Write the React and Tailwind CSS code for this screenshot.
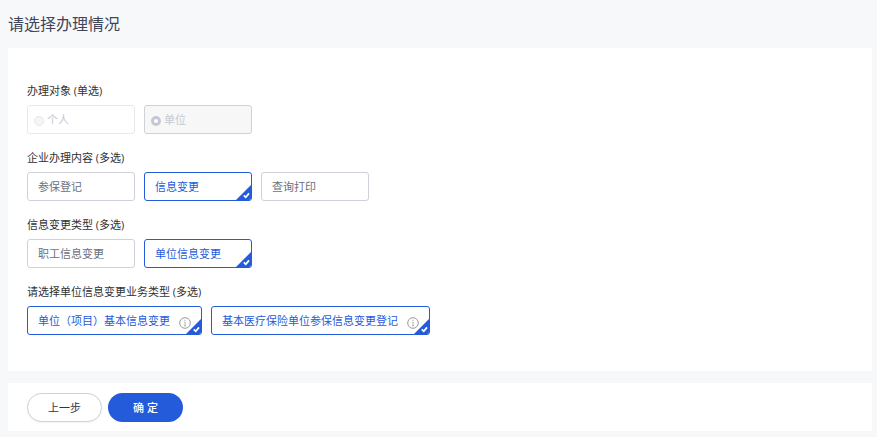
import { useState } from "react";

const groups = [
  {
    key: "content",
    label: "企业办理内容 (多选)",
    options: [{ label: "参保登记" }, { label: "信息变更" }, { label: "查询打印" }],
  },
  {
    key: "changeType",
    label: "信息变更类型 (多选)",
    options: [{ label: "职工信息变更" }, { label: "单位信息变更" }],
  },
  {
    key: "business",
    label: "请选择单位信息变更业务类型 (多选)",
    options: [
      { label: "单位（项目）基本信息变更", hasInfo: true },
      { label: "基本医疗保险单位参保信息变更登记", hasInfo: true },
    ],
  },
];

const targets = ["个人", "单位"];

function OptionGroup({ label, children }) {
  return (
    <fieldset>
      <legend className="mb-1 text-[11px] leading-5 text-[#303133]">{label}</legend>
      <div className="flex flex-wrap gap-[9px]">{children}</div>
    </fieldset>
  );
}

function InfoIcon() {
  return (
    <svg className="ml-[9px] mt-[3px] w-3 h-3 shrink-0" viewBox="0 0 12 12" fill="none" aria-hidden="true">
      <circle cx="6" cy="6" r="5.3" stroke="#999" />
      <path d="M4.9 5.2H6.1V8.8M5 8.8H7.2" stroke="#999" strokeWidth="0.7" />
      <rect x="5.5" y="2.8" width="1" height="1" fill="#999" />
    </svg>
  );
}

function CheckCorner() {
  return (
    <svg className="absolute right-0 bottom-0 w-[15px] h-[15px]" viewBox="0 0 15 15" aria-hidden="true">
      <path d="M15 0V15H0Z" fill="#245bdb" />
      <path d="M7.8 10.4L9.8 12.3L13 8.4" fill="none" stroke="#fff" strokeWidth="1.8" />
    </svg>
  );
}

function CheckOption({ label, hasInfo, checked, onChange }) {
  return (
    <label
      className={`relative flex items-center min-w-[108px] h-[29px] px-[10px] pt-[2px] border rounded-[3px] overflow-hidden text-[11px] cursor-pointer ${
        checked ? "border-[#245bdb] text-[#245bdb]" : "border-[#cfd0da] text-[#6b6f80]"
      }`}
    >
      <input type="checkbox" className="sr-only" checked={checked} onChange={onChange} />
      <span>{label}</span>
      {hasInfo && <InfoIcon />}
      {checked && <CheckCorner />}
    </label>
  );
}

export default function App() {
  const [selected, setSelected] = useState([
    "信息变更",
    "单位信息变更",
    "单位（项目）基本信息变更",
    "基本医疗保险单位参保信息变更登记",
  ]);

  const toggle = (label) => {
    setSelected((prev) =>
      prev.includes(label) ? prev.filter((l) => l !== label) : [...prev, label]
    );
  };

  return (
    <main className="min-h-screen bg-[#f7f8fa] pl-2 pr-[5px] pb-[6px] font-['Open_Sans','Noto_Sans_CJK_SC',sans-serif]">
      <h1 className="h-12 text-base leading-[48px] text-[#41455c]">请选择办理情况</h1>

      <section className="bg-white px-[19px] pt-[33px] pb-9 space-y-[14px]">
        <OptionGroup label="办理对象 (单选)">
          {targets.map((target) => {
            const active = target === "单位";
            return (
              <label
                key={target}
                className={`flex items-center gap-[3px] min-w-[108px] h-[29px] px-[6px] pt-[2px] border rounded-[3px] text-[11px] text-[#c5c8d2] ${
                  active ? "border-[#cfd0da] bg-[#f7f7f7]" : "border-[#e8e8ea]"
                }`}
              >
                <input
                  type="radio"
                  name="target"
                  disabled
                  defaultChecked={active}
                  className="appearance-none w-[10px] h-[10px] rounded-full border border-[#e8e8ea] bg-[#f5f5f6] checked:border-3 checked:border-[#c5c7d5] checked:bg-white"
                />
                {target}
              </label>
            );
          })}
        </OptionGroup>

        {groups.map((group) => (
          <OptionGroup key={group.key} label={group.label}>
            {group.options.map((option) => (
              <CheckOption
                key={option.label}
                {...option}
                checked={selected.includes(option.label)}
                onChange={() => toggle(option.label)}
              />
            ))}
          </OptionGroup>
        ))}
      </section>

      {/* Actions */}
      <section className="mt-3 flex gap-[6px] bg-white px-[19px] pt-[10px] pb-[9px] text-[11px]">
        <button
          type="button"
          className="w-[75px] h-[29px] pt-px rounded-full border border-[#cfd0da] bg-white text-[#303348] shadow-xs"
        >
          上一步
        </button>
        <button type="button" className="w-[75px] h-[29px] pt-px rounded-full bg-[#245bdb] text-white font-medium">
          确 定
        </button>
      </section>
    </main>
  );
}
